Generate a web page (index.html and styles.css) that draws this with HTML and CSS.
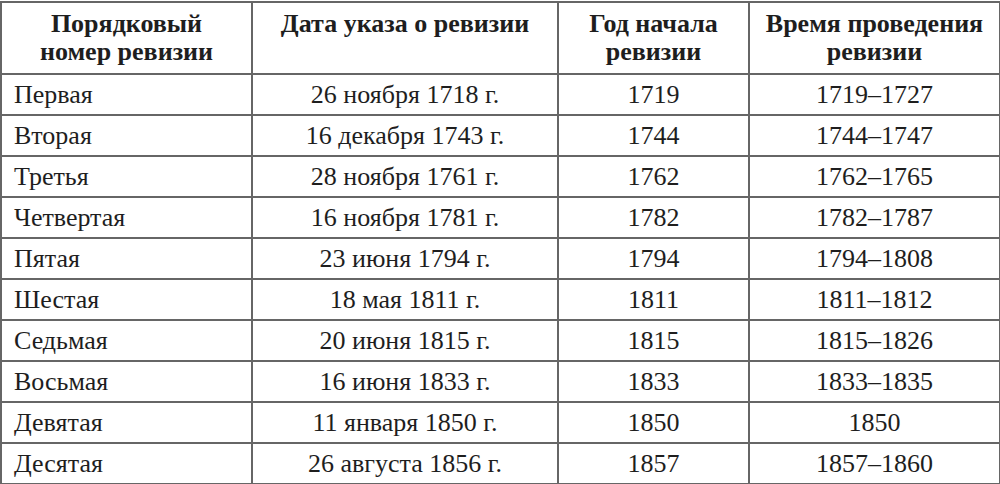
FILE: index.html
```html
<!DOCTYPE html>
<html lang="ru">
<head>
<meta charset="utf-8">
<link rel="stylesheet" href="styles.css">
</head>
<body>
<table class="rev">
  <colgroup>
    <col class="c1"><col class="c2"><col class="c3"><col class="c4">
  </colgroup>
  <thead>
    <tr>
      <th>Порядковый<br>номер ревизии</th>
      <th class="top">Дата указа о ревизии</th>
      <th>Год начала<br>ревизии</th>
      <th>Время проведения<br>ревизии</th>
    </tr>
  </thead>
  <tbody>
    <tr><td class="name">Первая</td><td>26 ноября 1718 г.</td><td>1719</td><td>1719–1727</td></tr>
    <tr><td class="name">Вторая</td><td>16 декабря 1743 г.</td><td>1744</td><td>1744–1747</td></tr>
    <tr><td class="name">Третья</td><td>28 ноября 1761 г.</td><td>1762</td><td>1762–1765</td></tr>
    <tr><td class="name">Четвертая</td><td>16 ноября 1781 г.</td><td>1782</td><td>1782–1787</td></tr>
    <tr><td class="name">Пятая</td><td>23 июня 1794 г.</td><td>1794</td><td>1794–1808</td></tr>
    <tr><td class="name">Шестая</td><td>18 мая 1811 г.</td><td>1811</td><td>1811–1812</td></tr>
    <tr><td class="name">Седьмая</td><td>20 июня 1815 г.</td><td>1815</td><td>1815–1826</td></tr>
    <tr><td class="name">Восьмая</td><td>16 июня 1833 г.</td><td>1833</td><td>1833–1835</td></tr>
    <tr><td class="name">Девятая</td><td>11 января 1850 г.</td><td>1850</td><td>1850</td></tr>
    <tr><td class="name">Десятая</td><td>26 августа 1856 г.</td><td>1857</td><td>1857–1860</td></tr>
  </tbody>
</table>
</body>
</html>
```

FILE: styles.css
```css
html, body {
  margin: 0;
  padding: 0;
  background: #ffffff;
}
body {
  font-family: "Liberation Serif", "Times New Roman", serif;
  color: #1e1e1e;
}
.rev {
  border-collapse: collapse;
  table-layout: fixed;
  width: 999px;
  margin-top: 1px;
}
.c1 { width: 251px; }
.c2 { width: 306px; }
.c3 { width: 191px; }
.c4 { width: 251px; }
.rev th, .rev td {
  border: 2px solid #666666;
  padding: 0;
  text-align: center;
}
.rev th {
  font-weight: bold;
  font-size: 26px;
  line-height: 28px;
  height: 70px;
  vertical-align: middle;
}
.rev th.top {
  vertical-align: top;
  padding-top: 7px;
  height: 63px;
}
.rev td {
  font-size: 26px;
  height: 39px;
  line-height: 39px;
}
.rev td.name {
  text-align: left;
  padding-left: 12px;
}
```
